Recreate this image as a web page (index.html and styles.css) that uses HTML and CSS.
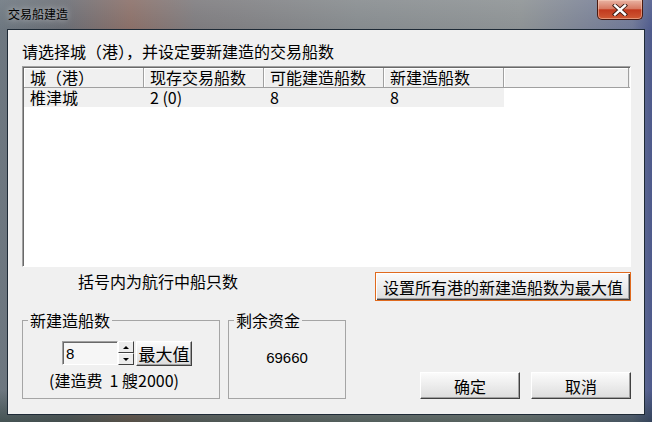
FILE: index.html
```html
<!DOCTYPE html>
<html lang="zh-CN">
<head>
  <meta charset="utf-8">
  <title>交易船建造</title>
  <link rel="stylesheet" href="styles.css">
</head>
<body>
  <div class="window">
    <div class="titlebar">
      <span class="title">交易船建造</span>
      <button class="close" aria-label="关闭">
        <svg width="16" height="12" viewBox="0 0 16 12">
          <path d="M3 1.5 L13 10.5 M13 1.5 L3 10.5" stroke="#3a1a12" stroke-width="4.2" stroke-linecap="square"/>
          <path d="M3 1.5 L13 10.5 M13 1.5 L3 10.5" stroke="#fff" stroke-width="2.4" stroke-linecap="square"/>
        </svg>
      </button>
    </div>

    <div class="client">
      <p class="prompt">请选择城（港），并设定要新建造的交易船数</p>

      <div class="list">
        <div class="list-head">
          <div class="col">城（港）</div>
          <div class="col">现存交易船数</div>
          <div class="col">可能建造船数</div>
          <div class="col">新建造船数</div>
          <div class="col col-fill"></div>
        </div>
        <div class="list-row">
          <div class="col">椎津城</div>
          <div class="col">2 (0)</div>
          <div class="col">8</div>
          <div class="col">8</div>
        </div>
      </div>

      <div class="note-row">
        <span class="note">括号内为航行中船只数</span>
        <button class="btn btn-all">设置所有港的新建造船数为最大值</button>
      </div>

      <div class="bottom-row">
        <fieldset class="group group-build">
          <legend>新建造船数</legend>
          <div class="spin-row">
            <input class="num" type="text" value="8">
            <div class="spin">
              <span class="spin-btn"><i class="arrow-up"></i></span>
              <span class="spin-btn"><i class="arrow-down"></i></span>
            </div>
            <button class="btn btn-max">最大值</button>
          </div>
          <div class="cost">(建造费&nbsp;&nbsp;1 艘2000)</div>
        </fieldset>

        <fieldset class="group group-funds">
          <legend>剩余资金</legend>
          <div class="funds">69660</div>
        </fieldset>

        <div class="actions">
          <button class="btn btn-action">确定</button>
          <button class="btn btn-action">取消</button>
        </div>
      </div>
    </div>
  </div>
</body>
</html>
```

FILE: styles.css
```css
* {
  box-sizing: border-box;
  margin: 0;
  padding: 0;
}
body {
  width: 652px;
  height: 422px;
  overflow: hidden;
  background: #5a6068;
  font-family: "Noto Sans CJK SC", "Liberation Sans", sans-serif;
  font-size: 16px;
  color: #000;
}
.window {
  width: 652px;
  height: 422px;
  display: flex;
  flex-direction: column;
  padding: 0 7px 7px 7px;
  background:
    linear-gradient(180deg, rgba(255,255,255,0.10) 0%, rgba(255,255,255,0) 30px, rgba(0,0,0,0) 390px, rgba(20,40,30,0.45) 100%),
    linear-gradient(90deg, #6d7780 0%, #6a6d74 10%, #8a6f68 20%, #7d7b7e 30%, #868b8e 55%, #8d9294 80%, #6f7896 97%, #4e5a8c 100%);
}

/* title bar */
.titlebar {
  height: 29px;
  display: flex;
  align-items: flex-start;
  padding-left: 1px;
}
.title {
  font-size: 12px;
  line-height: 12px;
  margin-top: 8px;
  color: #000;
  text-shadow: 0 0 6px rgba(255,255,255,0.7);
}
.close {
  margin-left: auto;
  margin-right: 2px;
  width: 46px;
  height: 20px;
  display: flex;
  align-items: center;
  justify-content: center;
  border: 1px solid #4a1a10;
  border-top: none;
  border-radius: 0 0 5px 5px;
  background: linear-gradient(180deg, #e9b3a3 0%, #d77a63 45%, #c2391e 52%, #cf5a35 100%);
  box-shadow: inset 0 0 0 1px rgba(255,220,200,0.45);
}

/* client area */
.client {
  flex: 1;
  display: flex;
  flex-direction: column;
  background: #f0f0f0;
  border: 1px solid #1e2a36;
  padding: 13px 13px 15px 14px;
}
.prompt {
  font-size: 16px;
  line-height: 16px;
}

/* list view */
.list {
  margin-top: 7px;
  height: 201px;
  background: #fff;
  border: 1px solid;
  border-color: #a0a0a0 #fff #fff #a0a0a0;
  padding: 1px 0 0 1px;
  box-shadow: inset 1px 1px 0 #696969;
}
.list-head {
  display: flex;
  height: 20px;
  background: #f0f0f0;
  border-bottom: 1px solid #a0a0a0;
}
.list-head .col {
  border-right: 1px solid #a0a0a0;
  box-shadow: inset 1px 1px 0 #fff;
}
.list-head .col-fill {
  flex: 1;
  width: auto;
  margin-right: 1px;
}
.col {
  width: 120px;
  padding-left: 6px;
  font-size: 16px;
  line-height: 19px;
  white-space: nowrap;
}
.list-row {
  display: flex;
  width: 480px;
  height: 19px;
  background: #f0f0f0;
}
.list-row .col {
  line-height: 19px;
}

/* note and set-all button */
.note-row {
  margin-top: 5px;
  display: flex;
  align-items: flex-start;
}
.note {
  margin-left: 56px;
  margin-top: 1px;
  line-height: 16px;
}
.btn {
  font-family: "Noto Sans CJK SC", "Liberation Sans", sans-serif;
  font-size: 16px;
  color: #000;
  border: 1px solid;
  border-color: #fff #404040 #404040 #fff;
  box-shadow: inset -1px -1px 0 #a0a0a0;
  background: linear-gradient(180deg, #fbfbfb 0%, #ececec 50%, #dcdcdc 100%);
  line-height: 18px;
}
.btn-all {
  margin-left: auto;
  width: 256px;
  height: 29px;
  border-color: #e06a1e;
  box-shadow: inset 1px 1px 0 #fff, inset -1px -1px 0 #404040, inset -2px -2px 0 #a0a0a0;
}

/* bottom area */
.bottom-row {
  margin-top: 11px;
  display: flex;
  align-items: flex-end;
}
.group {
  border: 1px solid #a5a5a5;
  height: 87px;
}
.group legend {
  margin-left: 5px;
  padding: 0 2px;
  font-size: 16px;
  line-height: 16px;
}
.group-build {
  width: 198px;
}
.group-funds {
  width: 118px;
  margin-left: 8px;
}
.spin-row {
  display: flex;
  align-items: flex-start;
  margin-top: 13px;
  margin-left: 39px;
}
.num {
  width: 56px;
  height: 24px;
  padding-left: 3px;
  font-family: "Liberation Sans", sans-serif;
  font-size: 15px;
  background: #f6f6f6;
  border: 1px solid;
  border-color: #a0a0a0 #fff #fff #a0a0a0;
  box-shadow: inset 1px 1px 0 #696969;
  outline: none;
}
.spin {
  width: 16px;
  height: 24px;
  display: flex;
  flex-direction: column;
}
.spin-btn {
  flex: 1;
  display: flex;
  align-items: center;
  justify-content: center;
  border: 1px solid;
  border-color: #fff #404040 #404040 #fff;
  background: #ececec;
}
.arrow-up {
  border-left: 3px solid transparent;
  border-right: 3px solid transparent;
  border-bottom: 3px solid #000;
}
.arrow-down {
  border-left: 3px solid transparent;
  border-right: 3px solid transparent;
  border-top: 3px solid #000;
}
.btn-max {
  width: 56px;
  height: 25px;
  margin-left: 2px;
  font-size: 17px;
}
.cost {
  margin-top: 6px;
  margin-left: 26px;
  line-height: 16px;
  white-space: nowrap;
}
.funds {
  margin-top: 22px;
  text-align: center;
  font-family: "Liberation Sans", sans-serif;
  font-size: 15px;
  line-height: 16px;
}
.actions {
  margin-left: auto;
  display: flex;
  gap: 11px;
}
.btn-action {
  width: 100px;
  height: 27px;
}
```
